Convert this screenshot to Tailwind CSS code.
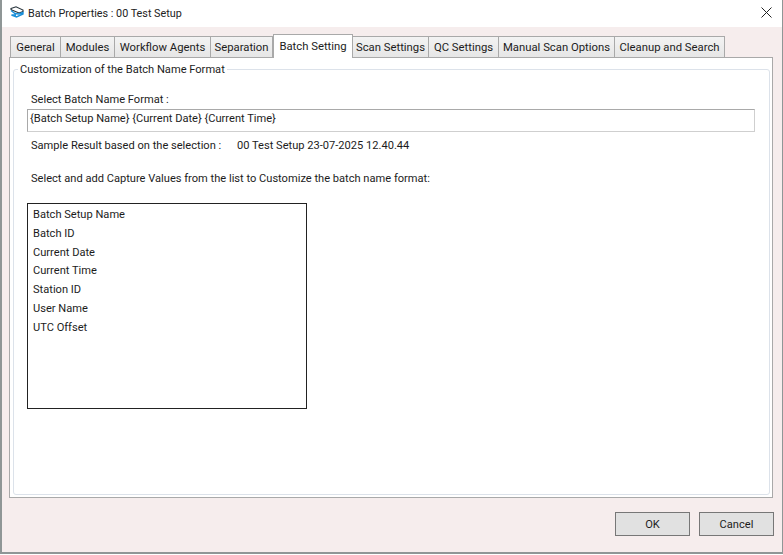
<!doctype html>
<html lang="en">
  <head>
    <meta charset="UTF-8" />
    <title>Batch Properties</title>
    <script src="https://cdn.jsdelivr.net/npm/@tailwindcss/browser@4"></script>
  </head>
  <body class="w-[783px] h-[555px] overflow-hidden bg-white font-['Roboto',sans-serif] text-[11.1px] leading-[16px] text-[#1c1c1c]">
    <div class="flex flex-col h-[554px] border-l-2 border-r border-b-2 border-[#8f9696] bg-[#f6eded]">
      <!-- Title bar -->
      <div class="flex items-center h-[27px] bg-white pl-[8px] pr-[10px] shrink-0">
        <svg width="14" height="12" viewBox="0 0 14 12" class="mr-[4px] -mt-[3px]">
          <path d="M1 2.5 L6 0.8 L13 4 L13 5.5 L9 7 L2.5 4.2 L1 3.5 Z" fill="none" stroke="#26323a" stroke-width="1.1" />
          <path d="M1 4.5 L5 7.5 L8.5 8 L13 6.5 L13 8 L6.5 11 L1.5 9 L6 9" fill="none" stroke="#1a8fd8" stroke-width="1.4" />
        </svg>
        <span class="text-[#222] text-[10.8px] pt-[1px]">Batch Properties : 00 Test Setup</span>
        <svg width="11" height="11" viewBox="0 0 11 11" class="ml-auto -mt-[2px]">
          <path d="M0.5 0.5 L10.5 10.5 M10.5 0.5 L0.5 10.5" stroke="#222" stroke-width="1" />
        </svg>
      </div>
      <!-- Tabs -->
      <div class="flex items-end h-[30px] pl-[8px] shrink-0 relative z-10 text-[11.3px]">
        <div class="w-[51px] h-[21px] pt-[2px] flex items-center justify-center border border-b-0 border-[#a9a9a9] bg-linear-to-b from-[#f3f3f3] to-[#e6e6e6]">General</div>
        <div class="w-[54px] h-[21px] pt-[2px] flex items-center justify-center border border-l-0 border-b-0 border-[#a9a9a9] bg-linear-to-b from-[#f3f3f3] to-[#e6e6e6]">Modules</div>
        <div class="w-[96px] h-[21px] pt-[2px] flex items-center justify-center border border-l-0 border-b-0 border-[#a9a9a9] bg-linear-to-b from-[#f3f3f3] to-[#e6e6e6]">Workflow Agents</div>
        <div class="w-[62px] h-[21px] pt-[2px] flex items-center justify-center border border-l-0 border-b-0 border-[#a9a9a9] bg-linear-to-b from-[#f3f3f3] to-[#e6e6e6]">Separation</div>
        <div class="w-[80px] h-[24px] -mb-px flex items-center justify-center border border-b-0 border-[#a9a9a9] bg-white">Batch Setting</div>
        <div class="w-[76px] h-[21px] pt-[2px] flex items-center justify-center border border-l-0 border-b-0 border-[#a9a9a9] bg-linear-to-b from-[#f3f3f3] to-[#e6e6e6]">Scan Settings</div>
        <div class="w-[70px] h-[21px] pt-[2px] flex items-center justify-center border border-l-0 border-b-0 border-[#a9a9a9] bg-linear-to-b from-[#f3f3f3] to-[#e6e6e6]">QC Settings</div>
        <div class="w-[116px] h-[21px] pt-[2px] flex items-center justify-center border border-l-0 border-b-0 border-[#a9a9a9] bg-linear-to-b from-[#f3f3f3] to-[#e6e6e6]">Manual Scan Options</div>
        <div class="w-[110px] h-[21px] pt-[2px] flex items-center justify-center border border-l-0 border-b-0 border-[#a9a9a9] bg-linear-to-b from-[#f3f3f3] to-[#e6e6e6]">Cleanup and Search</div>
      </div>
      <!-- Tab panel -->
      <div class="ml-[7px] mr-[9px] h-[441px] shrink-0 border border-[#a9a9a9] bg-white pt-[11px] pl-[3px] pr-[2px] pb-[2px]">
        <div class="relative h-full border border-[#dce2ea] rounded-[3px] pl-[13px] pr-[14px] pt-[22px]">
          <span class="absolute left-[4px] -top-[8px] bg-white px-[2px]">Customization of the Batch Name Format</span>
          <div class="pl-[4px]">Select Batch Name Format :</div>
          <div class="mt-[1px] h-[23px] pt-[1px] border border-[#a9a9a9] border-r-[#cfcfcf] border-b-[#cfcfcf] pl-[2px] whitespace-nowrap">{Batch Setup Name} {Current Date} {Current Time}</div>
          <div class="flex mt-[6px] pl-[4px]">
            <span class="w-[206px]">Sample Result based on the selection :</span>
            <span>00 Test Setup 23-07-2025 12.40.44</span>
          </div>
          <div class="mt-[17px] pl-[4px]">Select and add Capture Values from the list to Customize the batch name format:</div>
          <ul class="mt-[16px] w-[280px] h-[206px] border border-[#222] pl-[5px] pt-[2px] leading-[18.8px]">
            <li>Batch Setup Name</li>
            <li>Batch ID</li>
            <li>Current Date</li>
            <li>Current Time</li>
            <li>Station ID</li>
            <li>User Name</li>
            <li>UTC Offset</li>
          </ul>
        </div>
      </div>
      <!-- Footer buttons -->
      <div class="flex justify-end gap-[9px] pr-[8px] pt-[14px]">
        <button class="w-[75px] h-[24px] pt-[1px] border border-[#777] bg-[#e1e1e1]">OK</button>
        <button class="w-[75px] h-[24px] pt-[1px] border border-[#777] bg-[#e1e1e1]">Cancel</button>
      </div>
    </div>
  </body>
</html>
